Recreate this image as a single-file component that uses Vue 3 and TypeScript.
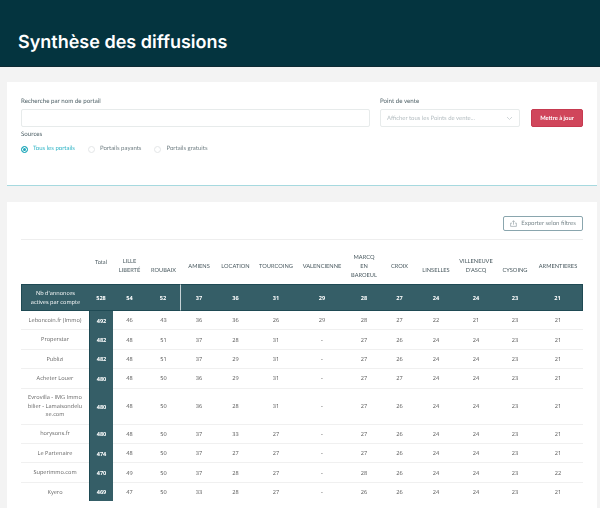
<script setup lang="ts">
interface Column {
    label: string
    width: number
    pos?: string
}

interface Row {
    name: string
    total: number
    values: (number | string)[]
    tall?: boolean
}

const columns: Column[] = [
    { label: 'LILLE LIBERTÉ', width: 33 },
    { label: 'ROUBAIX', width: 35, pos: 'low' },
    { label: 'AMIENS', width: 36 },
    { label: 'LOCATION', width: 37 },
    { label: 'TOURCOING', width: 44 },
    { label: 'VALENCIENNE', width: 48 },
    { label: 'MARCQ EN BAROEUL', width: 36, pos: 'narrow' },
    { label: 'CROIX', width: 35 },
    { label: 'LINSELLES', width: 38, pos: 'low' },
    { label: 'VILLENEUVE D\'ASCQ', width: 42 },
    { label: 'CYSOING', width: 36, pos: 'low' },
    { label: 'ARMENTIERES', width: 50 },
]

const summary = [54, 52, 37, 36, 31, 29, 28, 27, 24, 24, 23, 21]

const rows: Row[] = [
    { name: 'Leboncoin.fr (Immo)', total: 492, values: [46, 43, 36, 36, 26, 29, 28, 27, 22, 21, 23, 21] },
    { name: 'Properstar', total: 482, values: [48, 51, 37, 28, 31, '-', 27, 26, 24, 24, 23, 21] },
    { name: 'Publizi', total: 482, values: [48, 51, 37, 29, 31, '-', 27, 26, 24, 24, 23, 21] },
    { name: 'Acheter Louer', total: 480, values: [48, 50, 36, 29, 31, '-', 27, 27, 24, 24, 23, 21] },
    { name: 'Evrovilla - IMG Immobilier - Lamaisondeluxe.com', total: 480, values: [48, 50, 36, 28, 31, '-', 27, 26, 24, 24, 23, 21], tall: true },
    { name: 'horysons.fr', total: 480, values: [48, 50, 37, 33, 27, '-', 27, 26, 24, 24, 23, 21] },
    { name: 'Le Partenaire', total: 474, values: [48, 50, 37, 27, 27, '-', 27, 26, 24, 24, 23, 21] },
    { name: 'Superimmo.com', total: 470, values: [49, 50, 37, 28, 27, '-', 28, 26, 24, 24, 23, 22] },
    { name: 'Kyero', total: 469, values: [47, 50, 33, 28, 27, '-', 26, 26, 24, 24, 23, 21] },
]

const sources = ['Tous les portails', 'Portails payants', 'Portails gratuits']
</script>

<template>
    <div class="page">
        <header class="hero">
            <h1>Synthèse des diffusions</h1>
        </header>

        <main class="content">
            <section class="card filters">
                <div class="filters__top">
                    <div class="field field--grow">
                        <label>Recherche par nom de portail</label>
                        <div class="input" />
                    </div>
                    <div class="field field--select">
                        <label>Point de vente</label>
                        <div class="input input--select">
                            <span>Afficher tous les Points de vente...</span>
                            <svg width="7" height="5" viewBox="0 0 7 5" fill="none">
                                <path d="M1 1l2.5 2.5L6 1" stroke="#c4cbce" stroke-width="0.8" />
                            </svg>
                        </div>
                    </div>
                    <button class="btn-update">Mettre à jour</button>
                </div>
                <div class="sources">
                    <span class="sources__title">Sources</span>
                    <div class="radios">
                        <span
                            v-for="(s, i) in sources"
                            :key="s"
                            class="radio"
                            :class="{ 'radio--on': i === 0 }"
                        >
                            <i class="radio__dot" />{{ s }}
                        </span>
                    </div>
                </div>
            </section>

            <section class="card results">
                <div class="results__bar">
                    <button class="btn-export">
                        <svg width="7" height="7" viewBox="0 0 9 9" fill="none" stroke="#8c9a9e" stroke-width="0.8">
                            <path d="M4.5 6V1M3 2.4l1.5-1.5L6 2.4" />
                            <path d="M2.6 4H.8v4.2h7.4V4H6.4" />
                        </svg>
                        Exporter selon filtres
                    </button>
                </div>

                <table class="grid">
                    <colgroup>
                        <col style="width: 68px" />
                        <col style="width: 24px" />
                        <col v-for="c in columns" :key="c.label" :style="{ width: c.width + 'px' }" />
                    </colgroup>
                    <thead>
                        <tr class="grid__head">
                            <th />
                            <th><span class="high">Total</span></th>
                            <th v-for="c in columns" :key="c.label">
                                <span :class="c.pos">{{ c.label }}</span>
                            </th>
                        </tr>
                        <tr class="grid__summary">
                            <th class="summary-title">Nb d'annonces<br />actives par compte</th>
                            <th>528</th>
                            <th
                                v-for="(v, i) in summary"
                                :key="i"
                                :class="{ split: i === 1 }"
                            >{{ v }}</th>
                        </tr>
                    </thead>
                    <tbody>
                        <tr v-for="r in rows" :key="r.name" :class="{ tall: r.tall }">
                            <td class="name">{{ r.name }}</td>
                            <td class="total">{{ r.total }}</td>
                            <td v-for="(v, i) in r.values" :key="i">{{ v }}</td>
                        </tr>
                    </tbody>
                </table>
            </section>
        </main>
    </div>
</template>

<style>
html,
body {
    margin: 0;
    background: #f3f3f3;
}
</style>

<style scoped>
.page {
    width: 600px;
    height: 508px;
    overflow: hidden;
    background: #f3f3f3;
    font-family: Lato, sans-serif;
    color: #4a5a60;
    text-rendering: geometricPrecision;
}

.hero {
    height: 67px;
    box-sizing: border-box;
    background: #04343f;
    border-bottom: 1px solid #0d2a33;
    padding: 31px 0 0 18px;
}

.hero h1 {
    margin: 0;
    font-family: Inter, sans-serif;
    font-size: 18px;
    line-height: 24px;
    font-weight: 600;
    color: #fff;
}

.content {
    padding: 15px 3px 0 7px;
    will-change: transform;
}

.card {
    background: #fff;
    box-sizing: border-box;
}

.filters {
    height: 104px;
    padding: 16px 14px 0;
    border-bottom: 1px solid #a6d9df;
}

.filters__top {
    display: flex;
    align-items: flex-end;
}

.field label {
    display: block;
    font-size: 6.2px;
    line-height: 8px;
    margin-bottom: 3px;
    color: #4f6167;
}

.field--grow {
    width: 349px;
    margin-right: 10px;
}

.field--select {
    width: 140px;
    margin-right: 11px;
}

.input {
    height: 18px;
    box-sizing: border-box;
    border: 1px solid #e7ebeb;
    border-radius: 2px;
    background: #fff;
}

.input--select {
    display: flex;
    align-items: center;
    justify-content: space-between;
    padding: 0 6px;
    font-size: 5.95px;
    color: #b5bec2;
}

.btn-update {
    width: 52px;
    height: 18px;
    padding: 0;
    border: 1px solid #c63a50;
    border-radius: 2px;
    background: #d0465b;
    color: #fff;
    font-family: Lato, sans-serif;
    text-rendering: geometricPrecision;
    font-size: 5.8px;
    font-weight: 700;
}

.sources {
    margin-top: 4px;
}

.sources__title {
    display: block;
    font-size: 6.2px;
    line-height: 8px;
    color: #4f6167;
}

.radios {
    display: flex;
    margin-top: 6px;
    font-size: 6px;
    line-height: 8px;
    color: #717f84;
}

.radio {
    display: flex;
    align-items: center;
    margin-right: 13px;
}

.radio__dot {
    width: 7px;
    height: 7px;
    margin-right: 5px;
    box-sizing: border-box;
    border: 1px solid #e3e6e7;
    border-radius: 50%;
}

.radio--on {
    color: #2fb4c6;
}

.radio--on .radio__dot {
    border: 1.5px solid #1ba6b9;
    background: #1ba6b9;
    box-shadow: inset 0 0 0 1px #fff;
}

.results {
    margin-top: 16px;
    height: 320px;
    padding: 14px 14px 0;
}

.results__bar {
    display: flex;
    justify-content: flex-end;
    height: 23px;
}

.btn-export {
    display: flex;
    align-items: center;
    justify-content: center;
    gap: 4px;
    width: 80px;
    height: 15px;
    padding: 0;
    box-sizing: border-box;
    border: 1px solid #8aa6ae;
    border-radius: 2px;
    background: #fff;
    color: #7a888d;
    font-family: Lato, sans-serif;
    text-rendering: geometricPrecision;
    font-size: 6px;
}

.grid {
    width: 562px;
    table-layout: fixed;
    border-collapse: separate;
    border-spacing: 0;
    font-family: 'Open Sans', sans-serif;
    font-size: 5.6px;
    color: #555;
}

.grid th {
    padding: 0;
    font-weight: 400;
    text-align: center;
}

.grid__head th {
    height: 45px;
    box-sizing: border-box;
    padding-top: 8px;
    border-top: 1px solid #eeeeee;
    font-family: Lato, sans-serif;
    font-size: 5.7px;
    line-height: 9px;
    color: #4a5a60;
}

.grid__head span {
    display: block;
    padding: 0 2px;
}

.grid__head .low {
    padding-top: 8px;
}

.grid__head .high {
    padding-bottom: 8px;
}

.grid__head .narrow {
    padding: 0 5px;
}

.grid__summary th {
    height: 25px;
    background: #355e67;
    border-top: 1px solid #1f4a54;
    border-bottom: 1px solid #1f4a54;
    color: #fff;
    font-weight: 700;
}

.grid__summary th:first-child {
    border-left: 1px solid #1f4a54;
}

.grid__summary th:last-child {
    border-right: 1px solid #1f4a54;
}

.grid__summary .summary-title {
    font-weight: 400;
    font-size: 5.6px;
    line-height: 8.5px;
}

.grid__summary .split {
    border-right: 1px solid #c7d3d6;
}

.grid td {
    height: 18.4px;
    padding: 0;
    text-align: center;
    border-bottom: 1px solid #f0f0f0;
}

.grid tr:last-child td {
    border-bottom: 0;
}

.grid tr.tall td {
    height: 35px;
}

.grid .name {
    padding: 0 6px;
    line-height: 8.7px;
    word-break: break-all;
    color: #666;
}

.grid .total {
    background: #355e67;
    border-bottom: 0;
    border-left: 1px solid #1f4a54;
    color: #fff;
    font-weight: 700;
}
</style>
